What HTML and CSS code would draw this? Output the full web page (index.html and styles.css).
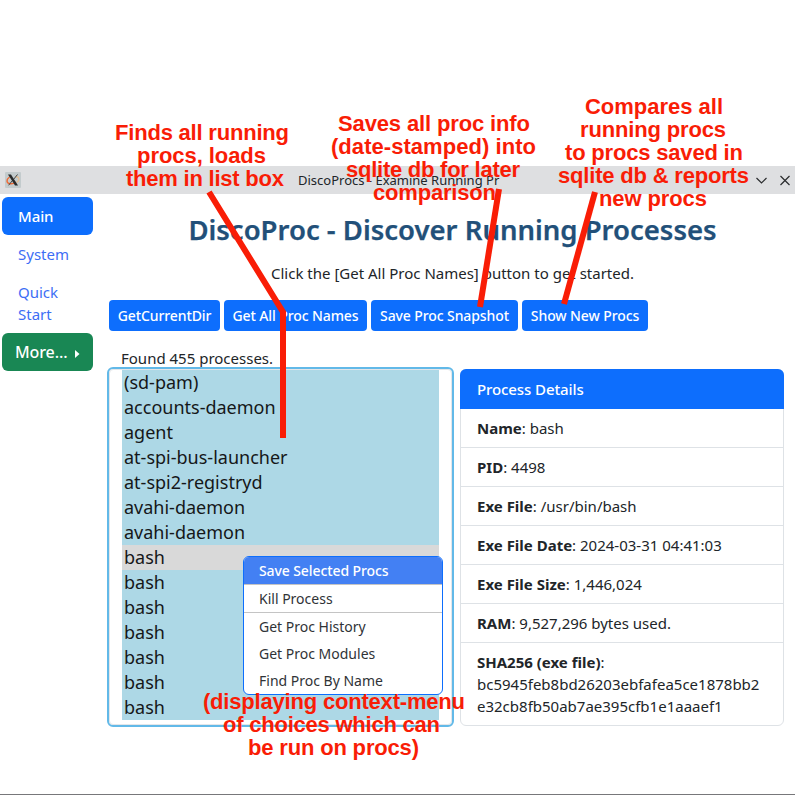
FILE: index.html
```html
<!DOCTYPE html>
<html lang="en">
<head>
<meta charset="utf-8">
<title>DiscoProcs</title>
<link rel="stylesheet" href="styles.css">
</head>
<body>
<div class="window">
  <header class="titlebar">
    <svg class="app-icon" viewBox="0 0 16 16"><rect width="16" height="16" rx="1" fill="#c3cbcd"/><path d="M4.5 5C1 7.5 1 11.5 5.5 11.8c2 .1 4-.6 5.500-1.800" fill="none" stroke="#ee6a35" stroke-width="1.4"/><path d="M10.500 4.600c4 0 4.500 3.400 1.500 5.800" fill="none" stroke="#e6bd90" stroke-width="1.2"/><path d="M3 2.500h3L13 13.500h-3z" fill="#292b2c"/><path d="M12.500 2.500 8.800 7.100M7 9 3.600 13.300" stroke="#404445" stroke-width="1"/></svg>
    <span class="window-title">DiscoProcs - Examine Running Pr</span>
    <svg class="controls" viewBox="0 0 38 14"><path d="m1.500 5 5 5 5-5M25.500 3l9 9m0-9-9 9" fill="none" stroke="#292b2d" stroke-width="1.200"/></svg>
  </header>
  <div class="body">
    <nav class="sidebar">
      <a class="nav-link active">Main</a>
      <a class="nav-link">System</a>
      <a class="nav-link">Quick Start</a>
      <button class="more">More...<svg viewBox="0 0 5 8"><path d="M0 0 4.500 4 0 8z" fill="#fff"/></svg></button>
    </nav>
    <main class="content">
      <h1>DiscoProc - Discover Running Processes</h1>
      <p class="intro">Click the [Get All Proc Names] button to get started.</p>
      <div class="buttons">
        <button class="btn b1">GetCurrentDir</button>
        <button class="btn b2">Get All Proc Names</button>
        <button class="btn b3">Save Proc Snapshot</button>
        <button class="btn b4">Show New Procs</button>
      </div>
      <p class="found">Found 455 processes.</p>
      <div class="columns">
        <div class="listbox">
          <ul class="options">
            <li>(sd-pam)</li><li>accounts-daemon</li><li>agent</li><li>at-spi-bus-launcher</li><li>at-spi2-registryd</li><li>avahi-daemon</li><li>avahi-daemon</li><li class="current">bash</li><li>bash</li><li>bash</li><li>bash</li><li>bash</li><li>bash</li><li>bash</li>
          </ul>
          <div class="menu">
            <div class="item hot">Save Selected Procs</div>
            <div class="item rule">Kill Process</div>
            <div class="item">Get Proc History</div>
            <div class="item">Get Proc Modules</div>
            <div class="item">Find Proc By Name</div>
          </div>
        </div>
        <section class="card">
          <div class="card-head">Process Details</div>
          <div class="row"><b>Name</b>: bash</div>
          <div class="row"><b>PID</b>: 4498</div>
          <div class="row"><b>Exe File</b>: /usr/bin/bash</div>
          <div class="row"><b>Exe File Date</b>: 2024-03-31 04:41:03</div>
          <div class="row"><b>Exe File Size</b>: 1,446,024</div>
          <div class="row"><b>RAM</b>: 9,527,296 bytes used.</div>
          <div class="row"><b>SHA256 (exe file)</b>:<br>bc5945feb8bd26203ebfafea5ce1878bb2<br>e32cb8fb50ab7ae395cfb1e1aaaef1</div>
        </section>
      </div>
    </main>
  </div>
</div>
<svg class="notes" viewBox="0 0 795 795">
  <g class="arrows"><path d="M209 192 283 312V438"/><path d="M499 189 480 307"/><path d="M595 192 564 304"/></g>
  <g class="note">
    <text x="115" y="140" textLength="174">Finds all running</text>
    <text x="137" y="163" textLength="129">procs, loads</text>
    <text x="126" y="186" textLength="158">them in list box</text>
    <text x="338" y="131" textLength="192">Saves all proc info</text>
    <text x="331" y="154" textLength="205">(date-stamped) into</text>
    <text x="346" y="177" textLength="174">sqlite db for later</text>
    <text x="373" y="200" textLength="123">comparison</text>
    <text x="585" y="114" textLength="138">Compares all</text>
    <text x="580" y="137" textLength="146">running procs</text>
    <text x="565" y="160" textLength="178">to procs saved in</text>
    <text x="558" y="183" textLength="191">sqlite db &amp; reports</text>
    <text x="599" y="206" textLength="108">new procs</text>
    <text x="203" y="709" textLength="262">(displaying context-menu</text>
    <text x="223" y="732" textLength="217">of choices which can</text>
    <text x="248" y="755" textLength="171">be run on procs)</text>
  </g>
</svg>
</body>
</html>
```
FILE: styles.css
```css
* { box-sizing: border-box; }
body { margin: 0; height: 795px; overflow: hidden; background: #fff; color: #212529; font: 15px/22px "Noto Sans", sans-serif; position: relative; }
button { font-family: inherit; border: 0; padding: 0; }
p, h1, ul { margin: 0; padding: 0; }
.window { margin-top: 166px; height: 629px; border-bottom: 1px solid #77777a; }
.titlebar { height: 28px; background: #dedfe1; display: flex; align-items: center; padding: 0 2px 0 5px; }
.app-icon { width: 16px; height: 16px; }
.window-title { font-size: 13px; margin-left: 277px; white-space: nowrap; }
.controls { width: 38px; height: 14px; margin-left: auto; }
.body { display: flex; padding: 3px 11px 0 2px; }
.sidebar { width: 91px; display: flex; flex-direction: column; margin-right: 16px; }
.nav-link { padding: 8px 16px; color: #3d6ef5; border-radius: 6px; }
.active { background: #0d6efd; color: #fff; font-weight: 500; letter-spacing: -.1px; }
.more { height: 38px; border-radius: 6px; background: #198754; color: #fff; font-size: 16px; font-weight: 500; letter-spacing: -.1px; display: flex; align-items: center; padding-left: 13px; }
.more svg { width: 5px; height: 8px; margin: 3px 0 0 8px; }
.content { flex: 1; min-width: 0; }
h1 { font-size: 27.5px; line-height: 34px; font-weight: 600; color: #225079; text-align: center; padding-top: 16px; margin-left: 12px; white-space: nowrap; -webkit-text-stroke: .25px #225079; }
.intro { text-align: center; margin: 15px 0 0 12px; }
.buttons { display: flex; gap: 4px; margin-top: 16px; }
.btn { height: 31px; border-radius: 4px; background: #0d6efd; color: #fff; font-size: 14px; font-weight: 500; letter-spacing: -.1px; white-space: nowrap; }
.b1 { width: 111px; }
.b2 { width: 143px; }
.b3 { width: 147px; }
.b4 { width: 126px; }
.found { margin: 16px 0 0 12px; height: 22px; }
.columns { display: flex; gap: 8px; }
.listbox { position: relative; width: 343px; height: 356px; border: 1px solid #e4e6e9; border-radius: 4px; outline: 2px solid #62b9e8; padding: 0 12px; }
.options { list-style: none; color: #151719; font-size: 18px; }
.options li { height: 25px; line-height: 25px; padding-left: 2px; background: #add8e6; }
.options .current { background: #d9d9d9; }
.menu { position: absolute; left: 133px; top: 186px; width: 200px; height: 139px; border: 1px solid #0d6efd; border-radius: 6px; background: #fff; overflow: hidden; font-size: 14px; color: #303337; }
.item { height: 27px; line-height: 27px; padding-left: 15px; }
.hot { height: 28px; background: #4380f3; color: #fff; font-weight: 500; letter-spacing: -.1px; border-bottom: 1px solid #c4c4c4; }
.rule { height: 28px; border-bottom: 1px solid #c4c4c4; }
.card { width: 324px; height: 357px; border: 1px solid #dee2e6; border-radius: 6px; }
.card-head { height: 40px; line-height: 40px; margin: -1px -1px 0; padding-left: 17px; background: #0d6efd; color: #fff; font-weight: 500; letter-spacing: -.1px; border-radius: 6px 6px 0 0; }
.row { padding: 8px 0 8px 16px; border-bottom: 1px solid #dee2e6; }
.row:last-child { border: 0; }
.row b { font-weight: 700; }
.notes { position: absolute; inset: 0; width: 795px; height: 795px; pointer-events: none; }
.arrows { fill: none; stroke: #f91d06; stroke-width: 6; }
.note { font: 700 22px "Liberation Sans", sans-serif; fill: #f91d06; }
```
